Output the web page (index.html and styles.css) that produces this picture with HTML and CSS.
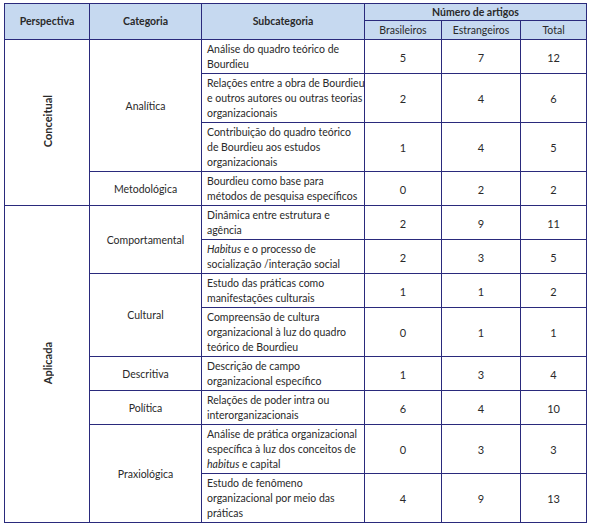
FILE: index.html
```html
<!DOCTYPE html>
<html lang="pt-br">
<head>
    <meta charset="UTF-8">
    <title>Perspectivas de uso de Bourdieu</title>
    <link rel="stylesheet" href="styles.css">
</head>
<body>
    <table class="quadro">
        <colgroup>
            <col class="c-persp">
            <col class="c-cat">
            <col class="c-sub">
            <col class="c-br">
            <col class="c-est">
            <col class="c-tot">
        </colgroup>
        <thead>
            <tr class="h1">
                <th rowspan="2">Perspectiva</th>
                <th rowspan="2">Categoria</th>
                <th rowspan="2">Subcategoria</th>
                <th colspan="3">Número de artigos</th>
            </tr>
            <tr class="h2">
                <th class="fino">Brasileiros</th>
                <th class="fino">Estrangeiros</th>
                <th class="fino">Total</th>
            </tr>
        </thead>
        <tbody>
            <tr>
                <td rowspan="4" class="persp"><span>Conceitual</span></td>
                <td rowspan="3" class="cat">Analítica</td>
                <td class="sub">Análise do quadro teórico de<br>Bourdieu</td>
                <td class="num">5</td><td class="num">7</td><td class="num">12</td>
            </tr>
            <tr>
                <td class="sub">Relações entre a obra de Bourdieu<br>e outros autores ou outras teorias<br>organizacionais</td>
                <td class="num">2</td><td class="num">4</td><td class="num">6</td>
            </tr>
            <tr>
                <td class="sub">Contribuição do quadro teórico<br>de Bourdieu aos estudos<br>organizacionais</td>
                <td class="num">1</td><td class="num">4</td><td class="num">5</td>
            </tr>
            <tr>
                <td class="cat">Metodológica</td>
                <td class="sub">Bourdieu como base para<br>métodos de pesquisa específicos</td>
                <td class="num">0</td><td class="num">2</td><td class="num">2</td>
            </tr>

            <tr>
                <td rowspan="8" class="persp"><span>Aplicada</span></td>
                <td rowspan="2" class="cat">Comportamental</td>
                <td class="sub">Dinâmica entre estrutura e<br>agência</td>
                <td class="num">2</td><td class="num">9</td><td class="num">11</td>
            </tr>
            <tr>
                <td class="sub"><em>Habitus</em> e o processo de<br>socialização /interação social</td>
                <td class="num">2</td><td class="num">3</td><td class="num">5</td>
            </tr>
            <tr>
                <td rowspan="2" class="cat">Cultural</td>
                <td class="sub">Estudo das práticas como<br>manifestações culturais</td>
                <td class="num">1</td><td class="num">1</td><td class="num">2</td>
            </tr>
            <tr>
                <td class="sub">Compreensão de cultura<br>organizacional à luz do quadro<br>teórico de Bourdieu</td>
                <td class="num">0</td><td class="num">1</td><td class="num">1</td>
            </tr>
            <tr>
                <td class="cat">Descritiva</td>
                <td class="sub">Descrição de campo<br>organizacional específico</td>
                <td class="num">1</td><td class="num">3</td><td class="num">4</td>
            </tr>
            <tr>
                <td class="cat">Política</td>
                <td class="sub">Relações de poder intra ou<br>interorganizacionais</td>
                <td class="num">6</td><td class="num">4</td><td class="num">10</td>
            </tr>
            <tr>
                <td rowspan="2" class="cat">Praxiológica</td>
                <td class="sub">Análise de prática organizacional<br>específica à luz dos conceitos de<br><em>habitus</em> e capital</td>
                <td class="num">0</td><td class="num">3</td><td class="num">3</td>
            </tr>
            <tr>
                <td class="sub">Estudo de fenômeno<br>organizacional por meio das<br>práticas</td>
                <td class="num">4</td><td class="num">9</td><td class="num">13</td>
            </tr>
        </tbody>
    </table>
</body>
</html>
```

FILE: styles.css
```css
/* Estilos globais */
body {
    margin: 0;
    padding: 3px 0 0 4px;
    background-color: #fff;
    font-family: Lato, "Open Sans", sans-serif;
    font-size: 10.5px;
    color: #2a2a2a;
}

/* Tabela */
.quadro {
    border-collapse: collapse;
    table-layout: fixed;
    width: 582px;
}

.c-persp { width: 85px; }
.c-cat { width: 112px; }
.c-sub { width: 163px; }
.c-br { width: 77px; }
.c-est { width: 79px; }
.c-tot { width: 66px; }

.quadro th,
.quadro td {
    border: 1px solid #2a2a7c;
    padding: 2px 5px 1px;
    line-height: 15px;
    vertical-align: middle;
}

/* Cabeçalho */
.quadro th {
    background-color: #c6d9f0;
    font-weight: bold;
    text-align: center;
    padding: 0 4px;
}

.h1 th { height: 16px; }
.h2 th { height: 18px; }

.quadro th.fino {
    font-weight: normal;
}

/* Células */
.persp {
    text-align: center;
    font-weight: bold;
    font-size: 11px;
}

.persp span {
    display: inline-block;
    writing-mode: vertical-rl;
    transform: rotate(180deg);
}

.cat {
    text-align: center;
}

.sub {
    white-space: nowrap;
    text-align: left;
}

.num {
    text-align: center;
    font-size: 11px;
}
```
